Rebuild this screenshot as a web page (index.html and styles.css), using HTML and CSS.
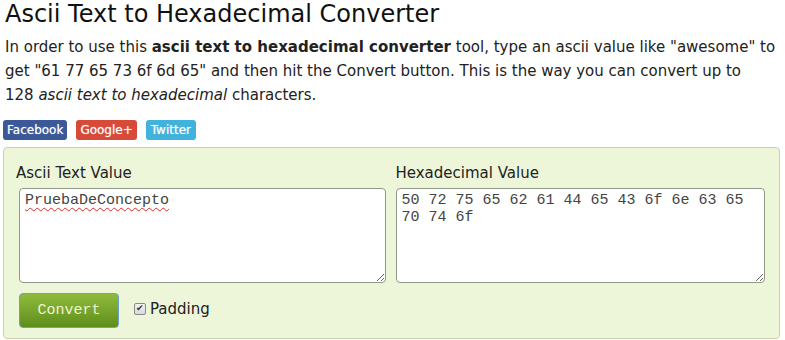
FILE: index.html
```html
<!DOCTYPE html>
<html lang="en">
  <head>
    <meta charset="UTF-8" />
    <title>Ascii Text to Hexadecimal Converter</title>
    <link rel="stylesheet" href="styles.css">
  </head>
  <body>
    <div class="page">
      <h1>Ascii Text to Hexadecimal Converter</h1>
      <p class="intro">
        In order to use this <b>ascii text to hexadecimal converter</b> tool, type an ascii value like "awesome" to
        get "61 77 65 73 6f 6d 65" and then hit the Convert button. This is the way you can convert up to
        128&nbsp;<i>ascii text to hexadecimal</i> characters.
      </p>
      <div class="share">
        <a class="share-btn facebook" href="#">Facebook</a>
        <a class="share-btn google" href="#">Google+</a>
        <a class="share-btn twitter" href="#">Twitter</a>
      </div>
      <section class="converter">
        <div class="fields">
          <div class="field">
            <label for="ascii">Ascii Text Value</label>
            <textarea id="ascii" class="misspelled" spellcheck="false">PruebaDeConcepto</textarea>
          </div>
          <div class="field">
            <label for="hex">Hexadecimal Value</label>
            <textarea id="hex" spellcheck="false">50 72 75 65 62 61 44 65 43 6f 6e 63 65 70 74 6f</textarea>
          </div>
        </div>
        <div class="actions">
          <button class="convert" type="button">Convert</button>
          <label class="padding"><input type="checkbox" checked /> Padding</label>
        </div>
      </section>
    </div>
  </body>
</html>
```

FILE: styles.css
```css
* {
  margin: 0;
  padding: 0;
  box-sizing: border-box;
}

body {
  font-family: "DejaVu Sans", Verdana, sans-serif;
  background-color: #fff;
  color: #222;
}

.page {
  padding: 0 3px;
}

h1 {
  font-size: 24px;
  font-weight: normal;
  line-height: 28px;
  margin-left: 2px;
  color: #111;
}

.intro {
  font-size: 15px;
  line-height: 24px;
  margin: 7px 0 0 2px;
}

.share {
  display: flex;
  gap: 9px;
  margin-top: 13px;
}

.share-btn {
  display: inline-block;
  color: #fff;
  font-size: 12px;
  line-height: 20px;
  padding: 0 4px;
  border-radius: 3px;
  text-decoration: none;
  text-shadow: 0 0 1px rgba(255, 255, 255, 0.6);
}

.facebook {
  background-color: #3b5998;
}

.google {
  background-color: #d84a38;
}

.twitter {
  background-color: #40b2dc;
  padding: 0 5px;
}

.converter {
  margin-top: 7px;
  width: 777px;
  height: 192px;
  background-color: #eef6da;
  border: 1px solid #c8d3ad;
  border-radius: 4px;
  padding: 13px 14px 0 12px;
}

.fields {
  display: flex;
  gap: 10px;
}

.field {
  flex: 1;
  display: flex;
  flex-direction: column;
}

.field label {
  font-size: 15px;
  line-height: 24px;
  margin-bottom: 3px;
}

.field textarea {
  margin-left: 3px;
  height: 95px;
  resize: vertical;
  border: 1px solid #8f9a86;
  border-radius: 4px;
  background: #fff;
  font-family: "Liberation Mono", "Courier New", monospace;
  font-size: 15px;
  line-height: 17px;
  color: #444;
  padding: 3px 5px;
}

.field + .field textarea {
  margin-left: 0;
}

.misspelled {
  text-decoration: underline wavy #e02828;
  text-decoration-thickness: 1px;
  text-underline-offset: 3px;
}

.actions {
  display: flex;
  align-items: center;
  margin: 10px 0 0 3px;
}

.convert {
  width: 100px;
  height: 35px;
  font-family: "Liberation Mono", "Courier New", monospace;
  font-size: 15px;
  color: #eef3d0;
  background: linear-gradient(#8fbc3c, #5f8d1c);
  border: 1px solid #6f9fc4;
  border-radius: 4px;
}

.padding {
  display: flex;
  align-items: center;
  gap: 4px;
  margin-left: 15px;
  margin-top: -4px;
  font-size: 15px;
}

.padding input {
  appearance: none;
  display: flex;
  align-items: center;
  justify-content: center;
  width: 12px;
  height: 12px;
  margin: 0;
  border: 1px solid #8a8a8a;
  border-radius: 2px;
  background: linear-gradient(#f4f4f4, #d8d8d8);
}

.padding input:checked::before {
  content: "\2714";
  font-size: 9px;
  line-height: 1;
  color: #333;
}
```
